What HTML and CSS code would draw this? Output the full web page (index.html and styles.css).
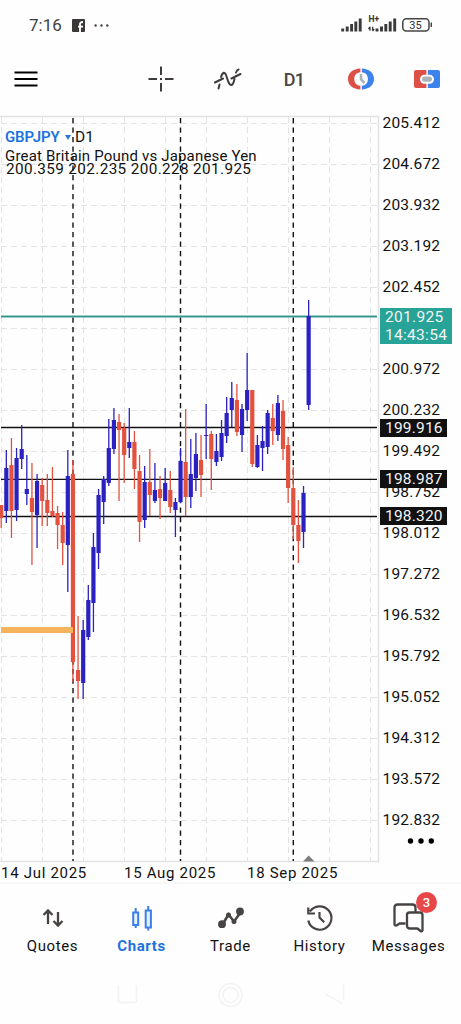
FILE: index.html
```
<!DOCTYPE html>
<html lang="en">
<head>
  <meta charset="UTF-8">
  <meta name="viewport" content="width=device-width, initial-scale=1.0">
  <title>GBPJPY D1</title>
  <link rel="stylesheet" href="styles.css">
</head>
<body>
  <div class="app">
    <div class="status-bar">
      <span class="time">7:16</span>
      <svg class="fb" width="13" height="13" viewBox="0 0 13 13"><rect width="13" height="13" rx="1" fill="#3c3838"/><path d="M8 13V7.6M6 7.6h5M8 8V5q0-2 3-2" fill="none" stroke="#fff" stroke-width="1.8"/></svg>
      <svg class="dots" width="15" height="3" viewBox="0 0 15 3" fill="#444"><circle cx="1.6" cy="1.5" r="1.2"/><circle cx="7.5" cy="1.5" r="1.2"/><circle cx="13.3" cy="1.5" r="1.2"/></svg>
      <svg class="signals" width="94" height="18" viewBox="338 15 94 18">
        <g stroke="#3a3a3a" stroke-width="2.9">
          <path d="M342.7 28.5v3M347.2 26.5v5M351.6 24v7.5M355.8 21.5v10M360.2 18.5v13"/>
          <path d="M377 28.5v3M381.5 26.5v5M385.8 24v7.5M390.2 21.5v10M394.7 18.5v13"/>
        </g>
        <path d="M370 26.800v4M372.600 26.800v4M368.500 29l1.500-2M372.600 31l1.500-2" stroke="#3a3a3a" stroke-width="1.3" fill="none"/>
        <text class="net" x="368.500" y="22.300">H+</text>
        <rect x="402.800" y="18.700" width="26.200" height="12.200" rx="3.500" fill="#fff" stroke="#444" stroke-width="1.500"/>
        <path d="M431.300 22.500v4.500" stroke="#444" stroke-width="1.500"/>
        <text class="battery" x="409.300" y="28.800">35</text>
      </svg>
    </div>

    <div class="toolbar">
      <svg class="menu" width="24" height="18" viewBox="0 0 24 18"><path d="M.5 2.500h23M.5 9h23M.5 15.500h23" stroke="#000" stroke-width="2.200"/></svg>
      <div class="tools">
        <svg width="28" height="28" viewBox="0 0 28 28" fill="none" stroke="#3f3b3b" stroke-width="2"><path d="M14 1.500v8.500M14 18v8.500M1.500 14H10M18 14h8.500M13 14h2"/></svg>
        <svg width="28" height="28" viewBox="0 0 28 28" fill="none" stroke="#3f3b3b" stroke-width="2" stroke-linecap="round"><path d="M1 17.500L9 13.500M4.500 23.500L5.500 19.500M7 12C8 8 10.500 6 12 10C14 15.500 15 20.500 17.500 20C19.500 19.500 19.500 17.500 20.500 14M17.500 13.500L26.500 9M22 7.500Q23 5 24.500 4.500"/></svg>
        <span class="tf">D1</span>
        <svg width="28" height="28" viewBox="0 0 28 28"><path d="M13.400 3.500V7.200C9.500 7.500 7.300 10 7.300 14s2.200 6.500 6.100 6.800V24.500C6 24.300 1 20 1 14S6 3.700 13.400 3.500z" fill="#dc5048"/><path d="M14.800 3.500V7.200C18.700 7.500 20.900 10 20.900 14s-2.200 6.500-6.100 6.800V24.500C22 24.300 27 20 27 14S22 3.700 14.800 3.500z" fill="#3c83ec"/><path d="M14 9v5.200l3.500 4" fill="none" stroke="#a9b5b9" stroke-width="2.600"/></svg>
        <svg width="28" height="28" viewBox="0 0 28 28"><path d="M13.400 5H3a2 2 0 0 0-2 2v14a2 2 0 0 0 2 2h10.400z" fill="#dc5048"/><path d="M14.800 5H25a2 2 0 0 1 2 2v14a2 2 0 0 1-2 2H14.800z" fill="#3c83ec"/><rect x="7" y="9.700" width="14" height="9" rx="4.500" fill="#fff"/><rect x="9" y="11.500" width="10" height="5.300" rx="2.500" fill="#a9b5b9"/></svg>
      </div>
    </div>

    <div class="chart-row">
      <div class="plot">
        <svg id="chart" width="380" height="748" viewBox="0 115 380 748"></svg>
        <div class="legend">
          <div class="pair"><b>GBPJPY</b><i class="caret"></i><span>D1</span></div>
          <div class="desc">Great Britain Pound vs Japanese Yen</div>
          <div class="ohlc">200.359 202.235 200.228 201.925</div>
        </div>
      </div>
      <div class="prices">
        <div id="scale"></div>
        <div class="tag live">201.925<br>14:43:54</div>
        <div class="tag level-1">199.916</div>
        <div class="tag level-2">198.987</div>
        <div class="tag level-3">198.320</div>
        <svg class="more" width="28" height="6" viewBox="0 0 28 6"><circle cx="3.500" cy="3" r="2.700"/><circle cx="14" cy="3" r="2.700"/><circle cx="24.300" cy="3" r="2.700"/></svg>
      </div>
    </div>

    <div class="dates">
      <span>14 Jul 2025</span>
      <span>15 Aug 2025</span>
      <span>18 Sep 2025</span>
    </div>

    <nav class="tabs">
      <a class="tab">
        <svg width="36" height="32" viewBox="0 0 36 32" fill="none" stroke="#484343" stroke-width="2.300"><path d="M13 22V9M8.500 13L13 8.500L17.500 13M23 10v13M18.500 19L23 23.500L27.500 19"/></svg>
        <span>Quotes</span>
      </a>
      <a class="tab active">
        <svg width="36" height="32" viewBox="0 0 36 32" fill="#e6f0fd" stroke="#3b7fe8" stroke-width="2"><path d="M11.700 6v4M11.700 23v3M24.200 4v4M24.200 25.500v3"/><rect x="9.200" y="10.500" width="5" height="12.500"/><rect x="21.700" y="8.500" width="5.200" height="17"/></svg>
        <span>Charts</span>
      </a>
      <a class="tab">
        <svg width="36" height="32" viewBox="0 0 36 32" fill="#484343" stroke="#484343" stroke-width="2.500"><path d="M9.500 22.500L15.500 12.500L21 19.500L27.500 10.500" fill="none"/><g stroke="none"><circle cx="9" cy="22.200" r="3.900"/><circle cx="15.500" cy="13" r="2.500"/><circle cx="21" cy="19.500" r="2.500"/><circle cx="27" cy="9.500" r="3.900"/></g></svg>
        <span>Trade</span>
      </a>
      <a class="tab">
        <svg width="36" height="32" viewBox="0 0 36 32" fill="none" stroke="#484343" stroke-width="2.200"><path d="M6.300 18.500A11.700 11.700 0 1 0 8 9.500M6.300 5.500v6H13M17.500 10v5.500l4.700 4.700"/></svg>
        <span>History</span>
      </a>
      <a class="tab">
        <svg width="36" height="32" viewBox="0 0 36 32" fill="none" stroke="#484343" stroke-width="2.300" stroke-linejoin="round"><path d="M14.500 21.500H8.500L5.500 23.500Q3.500 24 3.500 22V5.500Q3.500 2.500 6.500 2.500H21.500Q24.500 2.500 24.500 5.500V10.500"/><path d="M18.500 10.500H29Q31.500 10.500 31.500 13V28.500Q31 30 29.500 29L26.500 26.500H19Q16 26.500 16 23.500V13Q16 10.500 18.500 10.500Z" fill="#fff"/></svg>
        <span>Messages</span>
        <em class="badge">3</em>
      </a>
    </nav>

    <div class="sys-nav">
      <svg width="461" height="40" viewBox="0 0 461 40" fill="none" stroke="#f3f3f3" stroke-width="1.500"><path d="M118.500 6v15.500q0 2 2 2h14q2 0 2-2V6"/><circle cx="230.500" cy="16" r="11.500"/><circle cx="230.500" cy="16" r="7.500"/><path d="M343.500 5v16M325.500 15L342 24.500"/></svg>
    </div>
  </div>

  <script>
    const UP = '#2a21c0';
    const DOWN = '#e2523f';
    // [direction, high, low, body top, body bottom]
    const candles = [
      ['d', 505, 528, 505, 518],
      ['u', 450, 523, 468, 511],
      ['d', 438, 538, 465, 511],
      ['u', 448, 521, 458, 510],
      ['u', 425, 469, 449, 459],
      ['u', 455, 505, 489, 494],
      ['d', 463, 565, 498, 512],
      ['u', 474, 548, 481, 515],
      ['d', 478, 526, 485, 501],
      ['d', 474, 526, 500, 513],
      ['d', 467, 517, 511, 516],
      ['d', 506, 549, 513, 525],
      ['d', 512, 565, 525, 543],
      ['u', 450, 592, 476, 545],
      ['d', 460, 682, 474, 662],
      ['d', 616, 699, 670, 681],
      ['u', 620, 699, 630, 683],
      ['u', 585, 640, 600, 637],
      ['u', 533, 632, 547, 603],
      ['u', 489, 569, 495, 553],
      ['u', 476, 524, 479, 502],
      ['u', 419, 486, 448, 483],
      ['u', 408, 454, 420, 449],
      ['d', 414, 501, 422, 430],
      ['d', 423, 483, 428, 455],
      ['u', 408, 458, 442, 448],
      ['d', 431, 489, 442, 469],
      ['d', 455, 542, 471, 522],
      ['u', 466, 528, 482, 520],
      ['d', 449, 516, 482, 495],
      ['u', 463, 503, 490, 501],
      ['d', 476, 519, 489, 498],
      ['u', 468, 501, 483, 501],
      ['d', 471, 513, 490, 507],
      ['u', 498, 537, 502, 510],
      ['u', 448, 503, 461, 502],
      ['d', 409, 516, 462, 497],
      ['u', 439, 508, 474, 497],
      ['u', 433, 491, 454, 478],
      ['d', 435, 497, 460, 475],
      ['u', 404, 459, 435, 436],
      ['d', 431, 490, 434, 459],
      ['u', 434, 466, 451, 462],
      ['u', 420, 461, 433, 457],
      ['u', 397, 443, 413, 436],
      ['u', 382, 427, 398, 410],
      ['d', 384, 436, 400, 432],
      ['u', 404, 452, 409, 435],
      ['u', 353, 421, 390, 410],
      ['d', 390, 467, 390, 464],
      ['u', 435, 468, 445, 467],
      ['u', 426, 471, 441, 448],
      ['u', 410, 454, 413, 447],
      ['d', 404, 445, 418, 431],
      ['u', 395, 441, 403, 435],
      ['d', 400, 460, 411, 449],
      ['d', 437, 503, 445, 488],
      ['d', 467, 539, 488, 525],
      ['d', 500, 563, 525, 541],
      ['u', 486, 548, 493, 532],
      ['u', 300, 410, 316, 405]
    ];

    function line(x1, y1, x2, y2, color, width, dash) {
      return `<line x1="${x1}" y1="${y1}" x2="${x2}" y2="${y2}" stroke="${color}" stroke-width="${width}" ${dash ? `stroke-dasharray="${dash}"` : ''}/>`;
    }

    function renderChart() {
      let out = '';
      // grid
      for (let i = 0; i < 18; i++) {
        out += line(1, 123.5 + i * 41, 378, 123.5 + i * 41, '#e3e3e3', 1, '6 4');
      }
      for (let i = 0; i < 10; i++) {
        out += line(1.5 + i * 41, 117, 1.5 + i * 41, 861, '#e3e3e3', 1, '6 4');
      }
      out += '<path d="M0 116.500H378.500V861.500H0" fill="none" stroke="#e2e2e2" stroke-width="1.500"/>';
      // month separators
      [73, 180.5, 293.3].forEach(x => {
        out += line(x, 118, x, 861, '#111', 1.4, '5.3 4.2');
      });
      // levels
      out += line(1, 316.5, 377, 316.5, '#36988c', 1.8);
      [427.5, 479.3, 516.5].forEach(y => {
        out += line(1, y, 377, y, '#111', 1.3);
      });
      candles.forEach((c, i) => {
        const x = 1.2 + i * 5.124;
        const color = c[0] === 'u' ? UP : DOWN;
        out += line(x, c[1], x, c[2], color, 1.3);
        out += line(x, c[3], x, c[4], color, 4.2);
      });
      out += line(1, 630, 73, 630, '#f5b45c', 6);
      out += '<path d="M303 861.500L308.700 855.500L314.500 861.500Z" fill="#7d7d7d"/>';
      document.getElementById('chart').innerHTML = out;
    }

    function renderScale() {
      const scale = document.getElementById('scale');
      for (let i = 0; i < 18; i++) {
        const row = document.createElement('div');
        row.className = 'price';
        // the 201.712 row is hidden by the live price tag
        row.textContent = i === 5 ? '' : (205.412 - i * 0.74).toFixed(3);
        scale.appendChild(row);
      }
    }

    renderChart();
    renderScale();
  </script>
</body>
</html>
```

FILE: styles.css
```
* {
  box-sizing: border-box;
}
body {
  margin: 0;
  background: #fefefe;
  color: #111;
  font-family: Roboto, Arial, sans-serif;
}
.app {
  width: 461px;
  height: 1024px;
  display: flex;
  flex-direction: column;
  overflow: hidden;
}
.status-bar {
  height: 50px;
  padding: 0 29px;
  display: flex;
  align-items: center;
  color: #3f3f3f;
}
.time {
  font-size: 17px;
  width: 43px;
}
.dots {
  margin-left: 9px;
}
.signals {
  margin-left: auto;
  margin-top: -2px;
}
.net {
  font-size: 8.5px;
  font-weight: 700;
  fill: #333;
}
.battery {
  font-size: 11px;
  fill: #333;
}
.toolbar {
  height: 65px;
  padding: 0 20px 7px 14px;
  display: flex;
  align-items: center;
  justify-content: space-between;
}
.tools {
  width: 294px;
  display: flex;
  align-items: center;
  justify-content: space-between;
}
.tf {
  width: 28px;
  text-align: center;
  font-size: 18px;
  font-weight: 500;
  letter-spacing: -0.8px;
  color: #484444;
}
.chart-row {
  height: 748px;
  display: flex;
}
.plot {
  position: relative;
  width: 380px;
}
#chart {
  display: block;
}
.legend {
  position: absolute;
  left: 5px;
  top: 13px;
  white-space: nowrap;
}
.pair {
  height: 18px;
  display: flex;
  align-items: center;
  font-size: 15.5px;
}
.pair b {
  width: 60px;
  font-weight: 600;
  font-size: 15px;
  letter-spacing: -0.1px;
  color: #1d72e0;
}
.caret {
  border: 3px solid transparent;
  border-top: 5px solid #2f76dc;
  border-bottom: 0;
  margin-right: 4px;
}
.desc {
  margin-top: 3px;
  font-size: 15px;
  line-height: 14px;
  letter-spacing: 0.18px;
}
.ohlc {
  font-size: 15.3px;
  line-height: 13px;
  letter-spacing: 0.37px;
  padding-left: 1px;
}
.prices {
  position: relative;
  width: 81px;
}
#scale {
  margin-top: -12px;
}
.price {
  height: 41px;
  line-height: 41px;
  padding-left: 2.5px;
  font-size: 15.5px;
  letter-spacing: 0.2px;
}
.tag {
  position: absolute;
  left: 0;
  width: 67px;
  height: 18px;
  padding-left: 5px;
  background: #111;
  color: #f4f4f4;
  font-size: 15.5px;
  letter-spacing: 0.2px;
  line-height: 18px;
}
.live {
  top: 193px;
  width: 72px;
  height: 36px;
  background: #28a398;
  letter-spacing: 0.3px;
}
.level-1 {
  top: 304px;
}
.level-2 {
  top: 355px;
}
.level-3 {
  top: 392px;
}
.more {
  position: absolute;
  left: 27px;
  top: 723px;
}
.dates {
  height: 21px;
  padding-left: 1px;
  display: flex;
  border-bottom: 2px solid #f7f7f7;
  font-size: 15px;
  line-height: 20px;
}
.dates span {
  width: 123px;
  letter-spacing: 0.7px;
  white-space: nowrap;
}
.tabs {
  height: 95px;
  padding: 18px 8px 0;
  display: flex;
}
.tab {
  position: relative;
  flex: 1;
  display: flex;
  flex-direction: column;
  align-items: center;
  font-size: 15px;
  letter-spacing: 0.6px;
}
.tab span {
  line-height: 20px;
  margin-top: 2px;
}
.active {
  color: #1d72e0;
  font-weight: 700;
}
.badge {
  position: absolute;
  top: -10px;
  left: 52px;
  width: 21px;
  height: 21px;
  border-radius: 50%;
  background: #e8474a;
  color: #fff;
  font-size: 13px;
  font-style: normal;
  font-weight: 500;
  line-height: 21px;
  letter-spacing: 0;
  text-align: center;
}
.sys-nav {
  height: 45px;
}
```
